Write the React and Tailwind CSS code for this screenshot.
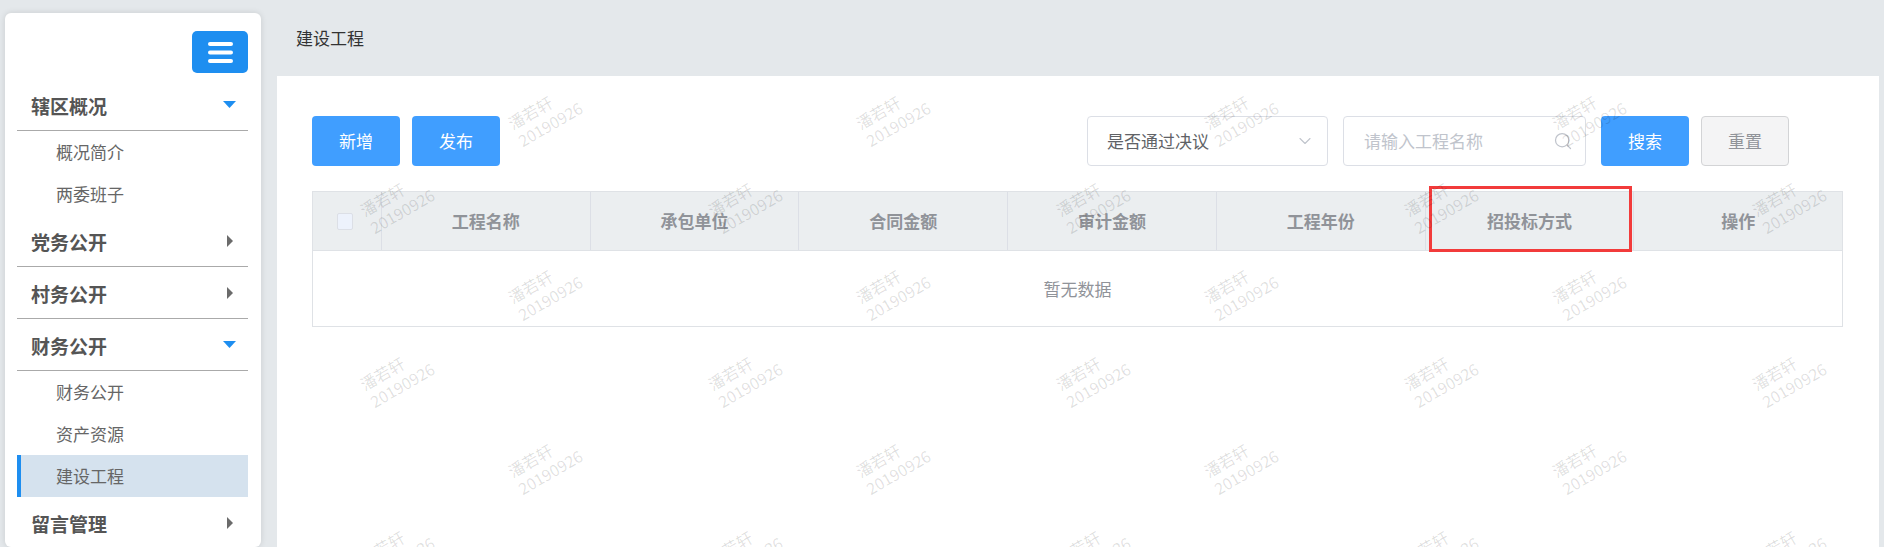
import { ChevronDown, Search } from 'lucide-react'

const menu = [
  { title: '辖区概况', open: true, items: ['概况简介', '两委班子'] },
  { title: '党务公开' },
  { title: '村务公开' },
  { title: '财务公开', open: true, items: ['财务公开', '资产资源', '建设工程'] },
  { title: '留言管理' },
]

const columns = ['工程名称', '承包单位', '合同金额', '审计金额', '工程年份', '招投标方式', '操作']

// watermark tiles, centres relative to the white panel
const marks = []
;[39, 213, 387].forEach((y) => [268, 616, 964, 1312].forEach((x) => marks.push({ x, y })))
;[126, 300, 474].forEach((y) => [120, 468, 816, 1164, 1512].forEach((x) => marks.push({ x, y })))

function DownArrow() {
  return (
    <svg width="13" height="7" viewBox="0 0 13 7">
      <polygon points="0,0 13,0 6.5,7" fill="#1e8ef0" />
    </svg>
  )
}

function RightArrow() {
  return (
    <svg width="6" height="12" viewBox="0 0 6 12">
      <polygon points="0,0 6,6 0,12" fill="#6b6b6b" />
    </svg>
  )
}

function Sidebar() {
  return (
    <aside className="w-[256px] shrink-0 ml-[5px] mt-[13px] bg-white rounded-[6px] shadow-[0_0_6px_rgba(0,0,0,0.12)] pt-[18px] pl-[12px] pr-[13px] pb-8">
      <div className="flex justify-end">
        <button className="w-[56px] h-[42px] rounded-[5px] bg-[#1e8ef0] flex items-center justify-center">
          <svg width="25" height="21" viewBox="0 0 25 21">
            <rect x="0" y="0" width="25" height="4" rx="2" fill="#fff" />
            <rect x="0" y="8.5" width="25" height="4" rx="2" fill="#fff" />
            <rect x="0" y="17" width="25" height="4" rx="2" fill="#fff" />
          </svg>
        </button>
      </div>
      <nav className="mt-[6px]">
        {menu.map((m) => (
          <div key={m.title}>
            <div className="h-[52px] flex items-center justify-between pl-[14px] pr-[12px] border-b border-[#aaaaaa]">
              <span className="text-[19px] font-bold text-[#555555] pt-[3px]">{m.title}</span>
              <span className="w-[13px] flex justify-center">{m.open ? <DownArrow /> : <RightArrow />}</span>
            </div>
            {m.open &&
              m.items.map((it) => {
                const active = it === '建设工程'
                return (
                  <div
                    key={it}
                    className={
                      active
                        ? 'h-[42px] flex items-center pl-[35px] border-l-4 border-[#1e8ef0] bg-[#d5e2ee] text-[17px] text-[#666666]'
                        : 'h-[42px] flex items-center pl-[39px] text-[17px] text-[#666666]'
                    }
                  >
                    {it}
                  </div>
                )
              })}
          </div>
        ))}
      </nav>
    </aside>
  )
}

function Toolbar() {
  return (
    <div className="flex items-center justify-between">
      <div className="flex gap-[12px]">
        <button className="w-[88px] h-[50px] rounded-[4px] bg-[#409eff] text-white text-[17px]">新增</button>
        <button className="w-[88px] h-[50px] rounded-[4px] bg-[#409eff] text-white text-[17px]">发布</button>
      </div>
      <div className="flex items-center mr-[54px]">
        <div className="w-[241px] h-[50px] border border-[#dcdfe6] rounded-[4px] flex items-center justify-between pl-[19px] pr-[12px]">
          <span className="text-[17px] text-[#606266]">是否通过决议</span>
          <ChevronDown size={20} strokeWidth={1.3} color="#c0c4cc" />
        </div>
        <div className="ml-[15px] w-[243px] h-[50px] border border-[#dcdfe6] rounded-[4px] flex items-center justify-between pl-[20px] pr-[12px]">
          <span className="text-[17px] text-[#c0c4cc]">请输入工程名称</span>
          <Search size={20} strokeWidth={1.5} color="#c0c4cc" />
        </div>
        <button className="ml-[15px] w-[88px] h-[50px] rounded-[4px] bg-[#409eff] text-white text-[17px]">搜索</button>
        <button className="ml-[12px] w-[88px] h-[50px] rounded-[4px] bg-[#f4f4f5] border border-[#d3d4d6] text-[#909399] text-[17px]">重置</button>
      </div>
    </div>
  )
}

function DataTable() {
  return (
    <div className="relative mt-[25px] border border-[#dfe2e6]">
      <div className="flex h-[59px] bg-[#ebeef0] border-b border-[#dfe2e6]">
        <div className="w-[69px] shrink-0 flex items-center pl-[24px] border-r border-[#dcdfe6]">
          <span className="w-[16px] h-[17px] rounded-[2px] border border-[#dcdfe6] bg-[#edf2fc]" />
        </div>
        {columns.map((c, i) => (
          <div
            key={c}
            className={
              i < columns.length - 1
                ? 'flex-1 flex items-center justify-center border-r border-[#dcdfe6] text-[17px] font-bold text-[#909399]'
                : 'flex-1 flex items-center justify-center text-[17px] font-bold text-[#909399]'
            }
          >
            {c}
          </div>
        ))}
      </div>
      <div className="h-[75px] flex items-center justify-center text-[17px] text-[#909399]">暂无数据</div>
      {/* annotation box */}
      <div className="absolute left-[1116px] top-[-6px] w-[203px] h-[66px] border-[3px] border-[#f23b3b]" />
    </div>
  )
}

export default function App() {
  return (
    <div className="h-[547px] overflow-hidden flex bg-[#e4e8eb] font-['Noto_Sans_CJK_SC',sans-serif]">
      <Sidebar />
      <main className="flex-1 ml-[16px] mr-[5px] flex flex-col">
        <header className="h-[76px] shrink-0 flex items-center pl-[19px] text-[17px] text-[#333333]">建设工程</header>
        <section className="relative flex-1 bg-white pt-[40px] pl-[35px] pr-[36px]">
          <Toolbar />
          <DataTable />
          <div className="absolute inset-0 overflow-hidden pointer-events-none">
            {marks.map((m, i) => (
              <div
                key={i}
                className="absolute -translate-x-1/2 -translate-y-1/2 -rotate-30 text-[16px] leading-[20px] text-black/[0.13] whitespace-nowrap"
                style={{ left: m.x, top: m.y }}
              >
                <div>潘若轩</div>
                <div>20190926</div>
              </div>
            ))}
          </div>
        </section>
      </main>
    </div>
  )
}
